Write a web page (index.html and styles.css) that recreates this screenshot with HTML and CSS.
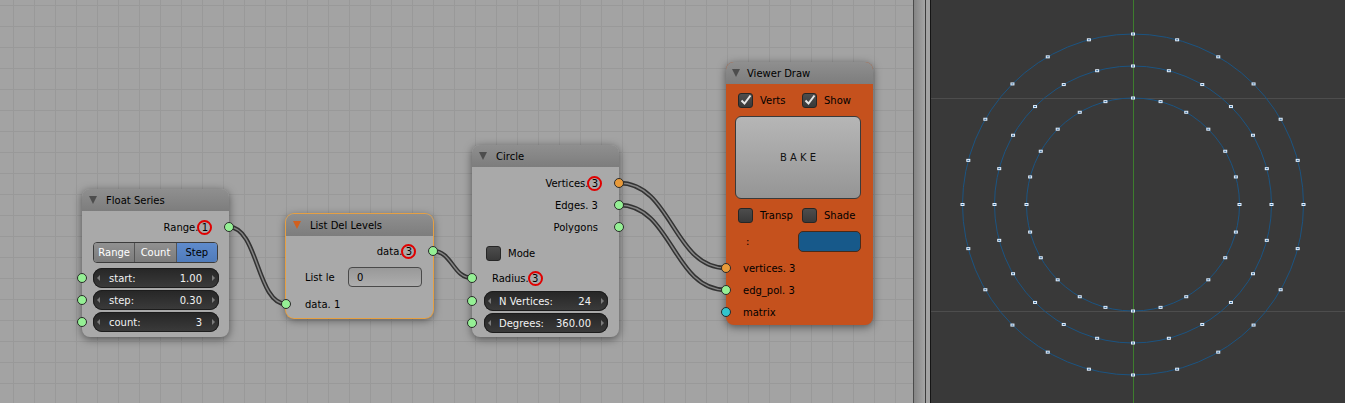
FILE: index.html
```html
<!DOCTYPE html>
<html>
<head>
<meta charset="utf-8">
<link rel="stylesheet" href="styles.css">
</head>
<body>
<div class="app">
  <div class="editor">
    <svg class="links" width="913" height="403">
      <g fill="none" stroke="#333" stroke-width="4.5">
        <path d="M229,227 C258,227 257,304 286,304"/>
        <path d="M433,251 C452,251 453,278 472,278"/>
        <path d="M619,183 C672,183 673,268 726,268"/>
        <path d="M619,205 C672,205 673,290 726,290"/>
      </g>
      <g fill="none" stroke="#858585" stroke-width="1.5">
        <path d="M229,227 C258,227 257,304 286,304"/>
        <path d="M433,251 C452,251 453,278 472,278"/>
        <path d="M619,183 C672,183 673,268 726,268"/>
        <path d="M619,205 C672,205 673,290 726,290"/>
      </g>
    </svg>

    <div class="node n-float">
      <div class="hdr"><span class="tri"></span><span class="title">Float Series</span></div>
      <div class="body">
        <div class="row out"><span>Range. </span><span class="mark">1</span><i class="sock g"></i></div>
        <div class="tabs"><span>Range</span><span>Count</span><span class="on">Step</span></div>
        <div class="frow first"><i class="sock g"></i><div class="num"><span>start:</span><span>1.00</span></div></div>
        <div class="frow"><i class="sock g"></i><div class="num"><span>step:</span><span>0.30</span></div></div>
        <div class="frow"><i class="sock g"></i><div class="num"><span>count:</span><span>3</span></div></div>
      </div>
    </div>

    <div class="node n-list">
      <div class="hdr"><span class="tri"></span><span class="title">List Del Levels</span></div>
      <div class="body">
        <div class="row out"><span>data. </span><span class="mark">3</span><i class="sock g"></i></div>
        <div class="row in prop"><span>List le</span><div class="txt">0</div></div>
        <div class="row in last"><span>data. 1</span><i class="sock g"></i></div>
      </div>
    </div>

    <div class="node n-circle">
      <div class="hdr"><span class="tri"></span><span class="title">Circle</span></div>
      <div class="body">
        <div class="row out"><span>Vertices. </span><span class="mark">3</span><i class="sock o"></i></div>
        <div class="row out"><span>Edges. 3</span><i class="sock g"></i></div>
        <div class="row out"><span>Polygons</span><i class="sock g"></i></div>
        <div class="row cbline"><span class="cb"></span><span>Mode</span></div>
        <div class="row in radius"><span>Radius. </span><span class="mark">3</span><i class="sock g"></i></div>
        <div class="frow"><i class="sock g"></i><div class="num"><span>N Vertices:</span><span>24</span></div></div>
        <div class="frow"><i class="sock g"></i><div class="num"><span>Degrees:</span><span>360.00</span></div></div>
      </div>
    </div>

    <div class="node n-viewer">
      <div class="hdr"><span class="tri"></span><span class="title">Viewer Draw</span></div>
      <div class="body">
        <div class="cbrow first">
          <div class="cbcell"><span class="cb"><svg width="13" height="13" viewBox="0 0 13 13"><polyline points="2.5,6.5 5.5,9.5 11.5,1.5" fill="none" stroke="#e6e6e6" stroke-width="2"/></svg></span><span>Verts</span></div>
          <div class="cbcell"><span class="cb"><svg width="13" height="13" viewBox="0 0 13 13"><polyline points="2.5,6.5 5.5,9.5 11.5,1.5" fill="none" stroke="#e6e6e6" stroke-width="2"/></svg></span><span>Show</span></div>
        </div>
        <div class="bake">B A K E</div>
        <div class="cbrow second">
          <div class="cbcell"><span class="cb"></span><span>Transp</span></div>
          <div class="cbcell"><span class="cb"></span><span>Shade</span></div>
        </div>
        <div class="colrow"><span>:</span><div class="color"></div></div>
        <div class="row in vin first"><span>vertices. 3</span><i class="sock o"></i></div>
        <div class="row in vin"><span>edg_pol. 3</span><i class="sock g"></i></div>
        <div class="row in vin"><span>matrix</span><i class="sock c"></i></div>
      </div>
    </div>
  </div>

  <div class="divider"></div>

  <div class="viewport">
    <svg width="414" height="403">
      <defs>
        <g id="v"><rect x="-2" y="-1.5" width="4" height="3" fill="#e2f0ff"/><rect x="-1" y="-0.5" width="2" height="1" fill="#2a6090"/></g>
      </defs>
      <line x1="0" y1="98.5" x2="414" y2="98.5" stroke="#4d4d4d"/>
      <line x1="0" y1="311.5" x2="414" y2="311.5" stroke="#4d4d4d"/>
      <line x1="202.5" y1="0" x2="202.5" y2="403" stroke="#3d7d2e"/>
      <g transform="translate(202 204.5)">
        <g fill="none" stroke="#1b5482" stroke-width="1">
          <circle r="106.5"/><circle r="138.5"/><circle r="170.5"/>
        </g>
        <use href="#v" transform="rotate(0) translate(106.5) rotate(0)"/>
        <use href="#v" transform="rotate(-15) translate(106.5) rotate(15)"/>
        <use href="#v" transform="rotate(-30) translate(106.5) rotate(30)"/>
        <use href="#v" transform="rotate(-45) translate(106.5) rotate(45)"/>
        <use href="#v" transform="rotate(-60) translate(106.5) rotate(60)"/>
        <use href="#v" transform="rotate(-75) translate(106.5) rotate(75)"/>
        <use href="#v" transform="rotate(-90) translate(106.5) rotate(90)"/>
        <use href="#v" transform="rotate(-105) translate(106.5) rotate(105)"/>
        <use href="#v" transform="rotate(-120) translate(106.5) rotate(120)"/>
        <use href="#v" transform="rotate(-135) translate(106.5) rotate(135)"/>
        <use href="#v" transform="rotate(-150) translate(106.5) rotate(150)"/>
        <use href="#v" transform="rotate(-165) translate(106.5) rotate(165)"/>
        <use href="#v" transform="rotate(-180) translate(106.5) rotate(180)"/>
        <use href="#v" transform="rotate(-195) translate(106.5) rotate(195)"/>
        <use href="#v" transform="rotate(-210) translate(106.5) rotate(210)"/>
        <use href="#v" transform="rotate(-225) translate(106.5) rotate(225)"/>
        <use href="#v" transform="rotate(-240) translate(106.5) rotate(240)"/>
        <use href="#v" transform="rotate(-255) translate(106.5) rotate(255)"/>
        <use href="#v" transform="rotate(-270) translate(106.5) rotate(270)"/>
        <use href="#v" transform="rotate(-285) translate(106.5) rotate(285)"/>
        <use href="#v" transform="rotate(-300) translate(106.5) rotate(300)"/>
        <use href="#v" transform="rotate(-315) translate(106.5) rotate(315)"/>
        <use href="#v" transform="rotate(-330) translate(106.5) rotate(330)"/>
        <use href="#v" transform="rotate(-345) translate(106.5) rotate(345)"/>
        <use href="#v" transform="rotate(0) translate(138.5) rotate(0)"/>
        <use href="#v" transform="rotate(-15) translate(138.5) rotate(15)"/>
        <use href="#v" transform="rotate(-30) translate(138.5) rotate(30)"/>
        <use href="#v" transform="rotate(-45) translate(138.5) rotate(45)"/>
        <use href="#v" transform="rotate(-60) translate(138.5) rotate(60)"/>
        <use href="#v" transform="rotate(-75) translate(138.5) rotate(75)"/>
        <use href="#v" transform="rotate(-90) translate(138.5) rotate(90)"/>
        <use href="#v" transform="rotate(-105) translate(138.5) rotate(105)"/>
        <use href="#v" transform="rotate(-120) translate(138.5) rotate(120)"/>
        <use href="#v" transform="rotate(-135) translate(138.5) rotate(135)"/>
        <use href="#v" transform="rotate(-150) translate(138.5) rotate(150)"/>
        <use href="#v" transform="rotate(-165) translate(138.5) rotate(165)"/>
        <use href="#v" transform="rotate(-180) translate(138.5) rotate(180)"/>
        <use href="#v" transform="rotate(-195) translate(138.5) rotate(195)"/>
        <use href="#v" transform="rotate(-210) translate(138.5) rotate(210)"/>
        <use href="#v" transform="rotate(-225) translate(138.5) rotate(225)"/>
        <use href="#v" transform="rotate(-240) translate(138.5) rotate(240)"/>
        <use href="#v" transform="rotate(-255) translate(138.5) rotate(255)"/>
        <use href="#v" transform="rotate(-270) translate(138.5) rotate(270)"/>
        <use href="#v" transform="rotate(-285) translate(138.5) rotate(285)"/>
        <use href="#v" transform="rotate(-300) translate(138.5) rotate(300)"/>
        <use href="#v" transform="rotate(-315) translate(138.5) rotate(315)"/>
        <use href="#v" transform="rotate(-330) translate(138.5) rotate(330)"/>
        <use href="#v" transform="rotate(-345) translate(138.5) rotate(345)"/>
        <use href="#v" transform="rotate(0) translate(170.5) rotate(0)"/>
        <use href="#v" transform="rotate(-15) translate(170.5) rotate(15)"/>
        <use href="#v" transform="rotate(-30) translate(170.5) rotate(30)"/>
        <use href="#v" transform="rotate(-45) translate(170.5) rotate(45)"/>
        <use href="#v" transform="rotate(-60) translate(170.5) rotate(60)"/>
        <use href="#v" transform="rotate(-75) translate(170.5) rotate(75)"/>
        <use href="#v" transform="rotate(-90) translate(170.5) rotate(90)"/>
        <use href="#v" transform="rotate(-105) translate(170.5) rotate(105)"/>
        <use href="#v" transform="rotate(-120) translate(170.5) rotate(120)"/>
        <use href="#v" transform="rotate(-135) translate(170.5) rotate(135)"/>
        <use href="#v" transform="rotate(-150) translate(170.5) rotate(150)"/>
        <use href="#v" transform="rotate(-165) translate(170.5) rotate(165)"/>
        <use href="#v" transform="rotate(-180) translate(170.5) rotate(180)"/>
        <use href="#v" transform="rotate(-195) translate(170.5) rotate(195)"/>
        <use href="#v" transform="rotate(-210) translate(170.5) rotate(210)"/>
        <use href="#v" transform="rotate(-225) translate(170.5) rotate(225)"/>
        <use href="#v" transform="rotate(-240) translate(170.5) rotate(240)"/>
        <use href="#v" transform="rotate(-255) translate(170.5) rotate(255)"/>
        <use href="#v" transform="rotate(-270) translate(170.5) rotate(270)"/>
        <use href="#v" transform="rotate(-285) translate(170.5) rotate(285)"/>
        <use href="#v" transform="rotate(-300) translate(170.5) rotate(300)"/>
        <use href="#v" transform="rotate(-315) translate(170.5) rotate(315)"/>
        <use href="#v" transform="rotate(-330) translate(170.5) rotate(330)"/>
        <use href="#v" transform="rotate(-345) translate(170.5) rotate(345)"/>
      </g>
    </svg>
  </div>
</div>
</body>
</html>
```

FILE: styles.css
```css
html, body {
  margin: 0;
  height: 100%;
  overflow: hidden;
}
body {
  font-family: "DejaVu Sans", sans-serif;
  font-size: 10px;
  color: #000;
}
.app {
  display: flex;
  width: 1345px;
  height: 403px;
}
.editor {
  position: relative;
  width: 913px;
  height: 403px;
  flex: none;
  overflow: hidden;
  background-color: #a3a3a3;
  background-image:
    linear-gradient(to right, #999 1px, transparent 1px),
    linear-gradient(to bottom, #999 1px, transparent 1px);
  background-size: 21px 21px;
  background-position: 13px 5px;
}
.divider {
  width: 18px;
  flex: none;
  background: linear-gradient(to right,
    #4b4b4b 0 1px, #858585 1px, #a5a5a5 12px,
    #3c3c3c 12px 13px, #a3a3a3 13px 17px, #151515 17px 18px);
}
.viewport {
  flex: 1;
  background: #393939;
  overflow: hidden;
}
.viewport svg { display: block; }
.links {
  position: absolute;
  left: 0;
  top: 0;
}

/* nodes */
.node {
  position: absolute;
  width: 147px;
  background: #a9a9a9;
  border-radius: 8px;
  box-shadow: 0 2px 8px rgba(0, 0, 0, .5);
}
.n-float { left: 82px; top: 189px; }
.n-list {
  left: 286px;
  top: 214px;
  box-shadow: 0 0 0 1px #e6a043, 0 2px 8px rgba(0, 0, 0, .5);
}
.n-circle { left: 472px; top: 145px; }
.n-viewer { left: 726px; top: 62px; background: #c5511d; }

.hdr {
  height: 22px;
  display: flex;
  align-items: center;
  padding-left: 7px;
  background: linear-gradient(#8f8f8f, #7d7d7d);
  border-radius: 8px 8px 0 0;
}
.tri {
  width: 0;
  height: 0;
  border-left: 4.5px solid transparent;
  border-right: 4.5px solid transparent;
  border-top: 8px solid #4d4d4d;
  margin-right: 9px;
}
.n-list .tri { border-top-color: #d2601e; }
.n-viewer .hdr { padding-left: 6px; }
.n-viewer .tri { margin-right: 7px; }

.row {
  height: 22px;
  display: flex;
  align-items: center;
  position: relative;
  white-space: pre;
}
.out { justify-content: flex-end; padding-right: 21px; }
.in { padding-left: 19px; }

.sock {
  position: absolute;
  width: 10px;
  height: 10px;
  box-sizing: border-box;
  border-radius: 50%;
  border: 1px solid #2a2a2a;
  top: 50%;
  margin-top: -5px;
}
.out .sock { right: -5px; }
.in .sock, .frow .sock { left: -5px; }
.g { background: #95f095; }
.o { background: #e89a3a; }
.c { background: #33c4cc; }

.mark { position: relative; }
.mark::after {
  content: "";
  position: absolute;
  left: 50%;
  top: 50%;
  width: 15px;
  height: 15px;
  box-sizing: border-box;
  margin: -7.5px 0 0 -7.5px;
  border: 2px solid #e00000;
  border-radius: 50%;
}

/* float series */
.n-float .body { padding: 5px 0 5px; }
.tabs {
  display: flex;
  height: 21px;
  margin: 4px 11px 0;
  border: 1px solid #3c3c3c;
  border-radius: 4px;
  overflow: hidden;
  box-sizing: border-box;
}
.tabs span {
  flex: 1;
  display: flex;
  align-items: center;
  justify-content: center;
  color: #fff;
  background: linear-gradient(#919191, #7b7b7b);
}
.tabs span + span { border-left: 1px solid #555; }
.tabs .on {
  background: linear-gradient(#5f8bcc, #4f7bbb);
  color: #000;
}

.frow {
  position: relative;
  display: flex;
  height: 20px;
  margin-top: 2px;
  padding: 0 10px 0 11px;
}
.frow.first { margin-top: 5px; }
.num {
  flex: 1;
  position: relative;
  display: flex;
  justify-content: space-between;
  align-items: center;
  height: 20px;
  border-radius: 9px;
  background: linear-gradient(#262626, #3b3b3b);
  box-shadow: inset 0 0 0 1px #1c1c1c;
  color: #f2f2f2;
  padding: 0 17px 0 16px;
}
.num::before, .num::after {
  content: "";
  position: absolute;
  top: 50%;
  margin-top: -3px;
  border: 3px solid transparent;
}
.num::before { left: 4px; border-left: 0; border-right-color: #7c7c7c; }
.num::after { right: 4px; border-right: 0; border-left-color: #7c7c7c; }

/* list del levels */
.n-list .body { padding: 4px 0 3px; }
.n-list .prop { margin-top: 4px; padding-right: 11px; }
.n-list .last { margin-top: 5px; }
.txt {
  margin-left: auto;
  width: 74px;
  height: 20px;
  box-sizing: border-box;
  border: 1px solid #4a4a4a;
  border-radius: 4px;
  background: linear-gradient(#999, #adadad);
  display: flex;
  align-items: center;
  padding-left: 8px;
}

/* circle */
.n-circle .body { padding: 5px 0 4px; }
.n-circle .frow { padding: 0 11px 0 12px; }
.n-circle .num { padding-left: 15px; }
.cbline { margin-top: 4px; padding-left: 14px; gap: 7px; }
.n-circle .radius { margin-top: 3px; padding-left: 20px; }
.cb {
  width: 15px;
  height: 15px;
  flex: none;
  box-sizing: border-box;
  border-radius: 3px;
  border: 1px solid #262626;
  background: linear-gradient(#4d4d4d, #393939);
  display: flex;
  align-items: center;
  justify-content: center;
}
.cb svg { display: block; }

/* viewer */
.n-viewer .body { padding: 6px 0 2px; }
.cbrow {
  height: 21px;
  display: grid;
  grid-template-columns: 64px 64px;
  padding-left: 12px;
}
.cbrow.second { margin-top: 6px; }
.cbcell {
  display: flex;
  align-items: center;
  gap: 7px;
}
.bake {
  margin: 5px 12px 0 9px;
  height: 83px;
  box-sizing: border-box;
  border: 1px solid #3a3a3a;
  border-radius: 6px;
  background: linear-gradient(#b6b6b6, #959595);
  display: flex;
  align-items: center;
  justify-content: center;
  color: #111;
}
.colrow {
  height: 21px;
  margin-top: 5px;
  display: flex;
  align-items: center;
  padding: 0 12px 0 20px;
}
.color {
  margin-left: auto;
  width: 63px;
  height: 21px;
  box-sizing: border-box;
  border: 1px solid #4a2a18;
  border-radius: 5px;
  background: #17598a;
}
.vin { padding-left: 17px; }
.vin.first { margin-top: 5px; }
```
